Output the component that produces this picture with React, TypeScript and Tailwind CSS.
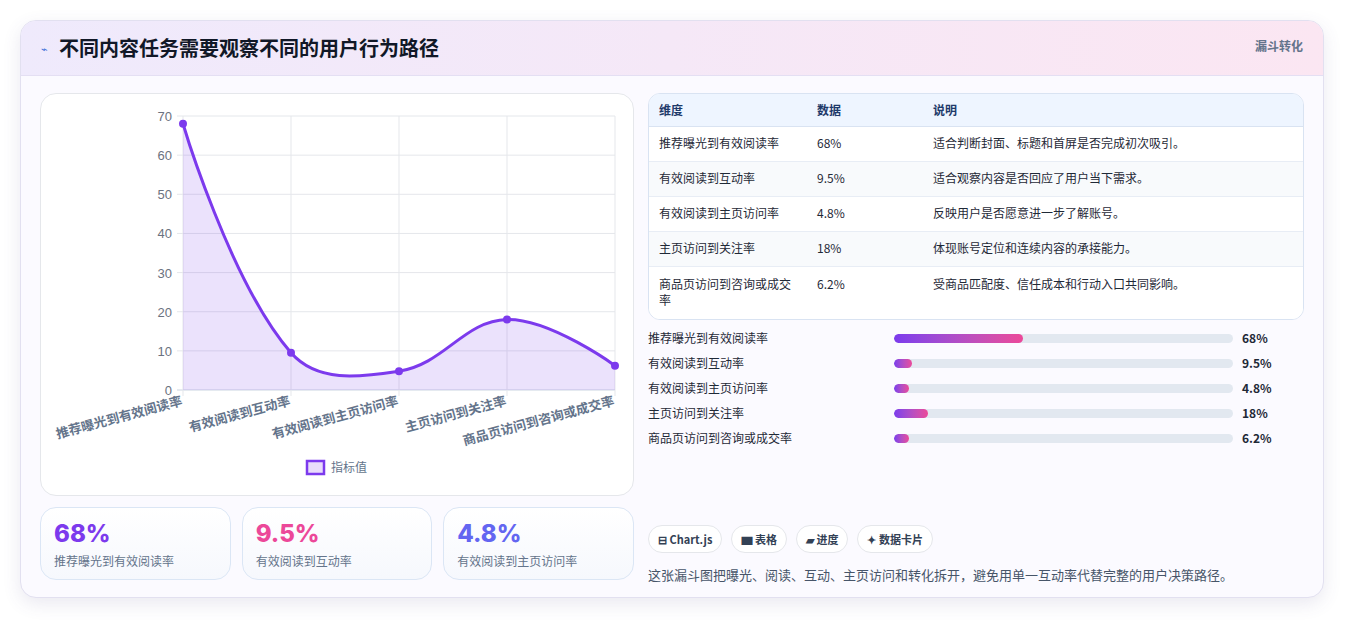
import React from "react";

const font = { fontFamily: '"Noto Sans CJK SC","Noto Sans",sans-serif' };
const rows = [
  ["推荐曝光到有效阅读率", "68%", "适合判断封面、标题和首屏是否完成初次吸引。", 68],
  ["有效阅读到互动率", "9.5%", "适合观察内容是否回应了用户当下需求。", 9.5],
  ["有效阅读到主页访问率", "4.8%", "反映用户是否愿意进一步了解账号。", 4.8],
  ["主页访问到关注率", "18%", "体现账号定位和连续内容的承接能力。", 18],
  ["商品页访问到咨询或成交率", "6.2%", "受商品匹配度、信任成本和行动入口共同影响。", 6.2],
] as const;

function Chart() {
  const xs = [182, 290, 398, 506, 614];
  const vals = [68, 9.5, 4.8, 18, 6.2];
  const y = (v: number) => 389 - v * 3.914;
  const d =
    "M182,122.8 C182,122.8 229.5,282.5 290,351.8 C316,381.5 357,376.5 398,370.2 C443.4,363.2 463,319.6 506,318.5 C549,317.4 614,364.7 614,364.7";
  const labels = ["推荐曝光到有效阅读率", "有效阅读到互动率", "有效阅读到主页访问率", "主页访问到关注率", "商品页访问到咨询或成交率"];
  return (
    <svg width="594" height="403" viewBox="40 93 594 403" className="block">
      {[0, 1, 2, 3, 4, 5, 6, 7].map((i) => (
        <g key={i}>
          <line x1={176} x2={614} y1={y(i * 10)} y2={y(i * 10)} stroke={i === 0 ? "#cbd5e1" : "#e5e7eb"} />
          <text x={171} y={y(i * 10) + 5} textAnchor="end" fontSize="13" fill="#6b7280" fontFamily="Liberation Sans, sans-serif">{i * 10}</text>
        </g>
      ))}
      {xs.map((x) => (
        <line key={x} x1={x} x2={x} y1={115} y2={395} stroke="#e5e7eb" />
      ))}
      <path d={d + " L614,389 L182,389 Z"} fill="rgba(124,58,237,0.15)" />
      <path d={d} fill="none" stroke="#7c3aed" strokeWidth="3" />
      {xs.map((x, i) => (
        <circle key={x} cx={x} cy={y(vals[i])} r="4" fill="#7c3aed" />
      ))}
      {labels.map((l, i) => (
        <text key={l} x={xs[i]} y={404} textAnchor="end" fontSize="13" fontWeight="600" fill="#64748b" transform={`rotate(-15 ${xs[i]} 404)`} style={font}>{l}</text>
      ))}
      <rect x={306} y={460} width={17} height={13} fill="#e9dcfb" stroke="#7c3aed" strokeWidth="2.5" />
      <text x={330} y={471} fontSize="12" fill="#64748b" style={font}>指标值</text>
    </svg>
  );
}

export default function App() {
  return (
    <div className="w-[1345px] h-[620px] bg-white pt-[20px] px-[20px]" style={font}>
      <div className="w-[1304px] h-[578px] rounded-2xl border border-[#e2e0f0] bg-[#fbfaff] shadow-[0_6px_18px_rgba(80,70,140,0.12)] overflow-hidden">
        <div className="h-[55px] flex items-center justify-between px-5 bg-gradient-to-r from-[#efeafc] to-[#fbe6f2] border-b border-[#e4dff3]">
          <div className="flex items-center gap-[11px]">
            <span className="text-[11px] text-[#3b6fd8]">⌁</span>
            <span className="text-[20px] font-bold text-[#111827]">不同内容任务需要观察不同的用户行为路径</span>
          </div>
          <span className="self-start mt-[16px] text-[12px] font-semibold text-[#64748b]">漏斗转化</span>
        </div>
        <div className="flex gap-[14px] px-[19px] pt-[17px]">
          <div className="w-[594px] flex flex-col gap-[11px]">
            <div className="h-[403px] rounded-2xl border border-[#e5e7eb] bg-white overflow-hidden">
              <Chart />
            </div>
            <div className="grid grid-cols-3 gap-[11px]">
              {[["68%", "text-[#7c3aed]", 0], ["9.5%", "text-[#ec4899]", 1], ["4.8%", "text-[#6366f1]", 2]].map(([v, c, i]) => (
                <div key={v as string} className="h-[73px] rounded-2xl border border-[#dbe6f5] bg-gradient-to-b from-white to-[#f6f8fd] px-[13px] pt-[10px]">
                  <div className={`text-[24px] font-extrabold leading-[32px] ${c}`} style={{ fontFamily: "Inter, sans-serif" }}>{v as string}</div>
                  <div className="text-[12px] text-[#64748b] mt-[2px]">{rows[i as number][0]}</div>
                </div>
              ))}
            </div>
          </div>
          <div className="w-[657px] flex flex-col">
            <div className="rounded-xl border border-[#d9e3f2] overflow-hidden bg-white">
              <div className="h-[33px] flex items-center bg-[#eef5ff] text-[12px] font-semibold text-[#1e3a6a] border-b border-[#d9e3f2]">
                <span className="w-[168px] pl-[10px]">维度</span>
                <span className="w-[116px]">数据</span>
                <span>说明</span>
              </div>
              {rows.map((r, i) => (
                <div key={r[0]} className={`flex items-start text-[12px] text-[#1f2937] border-b border-[#e8edf5] last:border-b-0 ${i % 2 ? "bg-[#f8fafc]" : "bg-white"} ${i === 4 ? "h-[52px] pt-[9px]" : "h-[35px] pt-[8px]"}`}>
                  <span className="w-[168px] pl-[10px] pr-4 leading-[16px]">{r[0]}</span>
                  <span className="w-[116px] leading-[16px]">{r[1]}</span>
                  <span className="leading-[16px]">{r[2]}</span>
                </div>
              ))}
            </div>
            <div className="mt-[10px] flex flex-col gap-[9px]">
              {rows.map((r) => (
                <div key={r[0]} className="flex items-center h-[16px] text-[12px] text-[#1f2937]">
                  <span className="w-[246px]">{r[0]}</span>
                  <div className="w-[339px] h-[9px] rounded-full bg-[#e2e8f0] overflow-hidden">
                    <div className="h-full rounded-full bg-gradient-to-r from-[#7c3aed] to-[#ec4899]" style={{ width: `${Math.max(r[3] as number * 0.56, 4.5)}%` }} />
                  </div>
                  <span className="ml-[9px] font-semibold">{r[1]}</span>
                </div>
              ))}
            </div>
            <div className="mt-[79px] flex gap-[9px]">
              {["⊟ Chart.js", "▆ 表格", "▰ 进度", "✦ 数据卡片"].map((t) => (
                <span key={t} className="h-[28px] px-[9px] flex items-center rounded-full border border-[#e5e7eb] bg-white text-[11px] font-semibold text-[#334155]">{t}</span>
              ))}
            </div>
            <div className="mt-[12px] text-[13px] text-[#475569]">这张漏斗图把曝光、阅读、互动、主页访问和转化拆开，避免用单一互动率代替完整的用户决策路径。</div>
          </div>
        </div>
      </div>
    </div>
  );
}
